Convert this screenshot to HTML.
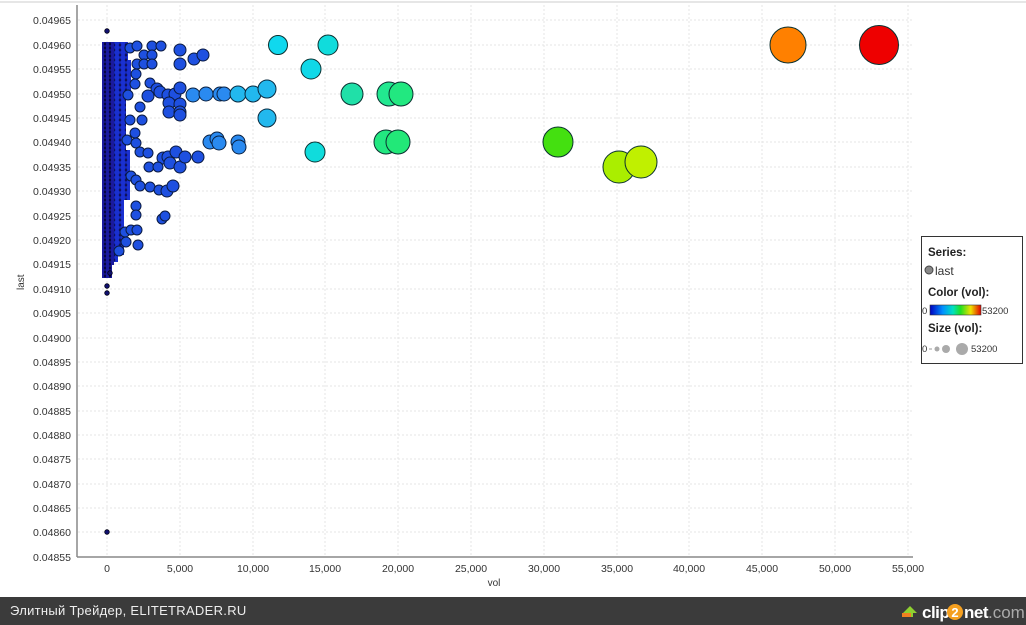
<!DOCTYPE html>
<html><head><meta charset="utf-8"><style>
body{margin:0;width:1026px;height:625px;overflow:hidden;background:#fff;font-family:"Liberation Sans",sans-serif}
svg{position:absolute;left:0;top:0}
</style></head><body>
<svg width="1026" height="625" viewBox="0 0 1026 625" font-family="Liberation Sans, sans-serif">
<defs>
<pattern id="p1" width="5" height="4" patternUnits="userSpaceOnUse"><rect width="5" height="4" fill="#0a0a55"/><circle cx="2.5" cy="2" r="2.6" fill="#1a1aa0" stroke="#000028" stroke-width="0.7"/></pattern>
<pattern id="p2" width="6" height="5" patternUnits="userSpaceOnUse"><circle cx="3" cy="2.5" r="3.3" fill="#1a30d0" stroke="#000040" stroke-width="0.8"/></pattern>
<linearGradient id="cg" x1="0" x2="1"><stop offset="0" stop-color="#0000c0"/><stop offset="0.25" stop-color="#0090ff"/><stop offset="0.45" stop-color="#00e0c0"/><stop offset="0.6" stop-color="#20e020"/><stop offset="0.8" stop-color="#f0e000"/><stop offset="1" stop-color="#e00000"/></linearGradient>
</defs>
<line x1="0" y1="2" x2="1026" y2="2" stroke="#ccc"/>
<g stroke="#e4e4e4" stroke-dasharray="2,2">
<line x1="78" x2="913" y1="20" y2="20"/><line x1="78" x2="913" y1="45" y2="45"/><line x1="78" x2="913" y1="69" y2="69"/><line x1="78" x2="913" y1="94" y2="94"/><line x1="78" x2="913" y1="118" y2="118"/><line x1="78" x2="913" y1="142" y2="142"/><line x1="78" x2="913" y1="167" y2="167"/><line x1="78" x2="913" y1="191" y2="191"/><line x1="78" x2="913" y1="216" y2="216"/><line x1="78" x2="913" y1="240" y2="240"/><line x1="78" x2="913" y1="264" y2="264"/><line x1="78" x2="913" y1="289" y2="289"/><line x1="78" x2="913" y1="313" y2="313"/><line x1="78" x2="913" y1="338" y2="338"/><line x1="78" x2="913" y1="362" y2="362"/><line x1="78" x2="913" y1="386" y2="386"/><line x1="78" x2="913" y1="411" y2="411"/><line x1="78" x2="913" y1="435" y2="435"/><line x1="78" x2="913" y1="459" y2="459"/><line x1="78" x2="913" y1="484" y2="484"/><line x1="78" x2="913" y1="508" y2="508"/><line x1="78" x2="913" y1="532" y2="532"/>
<line y1="5" y2="557" x1="107" x2="107"/><line y1="5" y2="557" x1="180" x2="180"/><line y1="5" y2="557" x1="253" x2="253"/><line y1="5" y2="557" x1="325" x2="325"/><line y1="5" y2="557" x1="398" x2="398"/><line y1="5" y2="557" x1="471" x2="471"/><line y1="5" y2="557" x1="544" x2="544"/><line y1="5" y2="557" x1="617" x2="617"/><line y1="5" y2="557" x1="689" x2="689"/><line y1="5" y2="557" x1="762" x2="762"/><line y1="5" y2="557" x1="835" x2="835"/><line y1="5" y2="557" x1="908" x2="908"/>
</g>
<line x1="77" y1="5" x2="77" y2="557" stroke="#888" stroke-width="1.5"/>
<line x1="77" y1="557" x2="913" y2="557" stroke="#888" stroke-width="1.5"/>
<g font-size="10.5" fill="#333" text-anchor="end">
<text x="71" y="24">0.04965</text><text x="71" y="49">0.04960</text><text x="71" y="73">0.04955</text><text x="71" y="98">0.04950</text><text x="71" y="122">0.04945</text><text x="71" y="146">0.04940</text><text x="71" y="171">0.04935</text><text x="71" y="195">0.04930</text><text x="71" y="220">0.04925</text><text x="71" y="244">0.04920</text><text x="71" y="268">0.04915</text><text x="71" y="293">0.04910</text><text x="71" y="317">0.04905</text><text x="71" y="342">0.04900</text><text x="71" y="366">0.04895</text><text x="71" y="390">0.04890</text><text x="71" y="415">0.04885</text><text x="71" y="439">0.04880</text><text x="71" y="463">0.04875</text><text x="71" y="488">0.04870</text><text x="71" y="512">0.04865</text><text x="71" y="536">0.04860</text><text x="71" y="561">0.04855</text>
</g>
<g font-size="10.5" fill="#333" text-anchor="middle">
<text x="107" y="572">0</text><text x="180" y="572">5,000</text><text x="253" y="572">10,000</text><text x="325" y="572">15,000</text><text x="398" y="572">20,000</text><text x="471" y="572">25,000</text><text x="544" y="572">30,000</text><text x="617" y="572">35,000</text><text x="689" y="572">40,000</text><text x="762" y="572">45,000</text><text x="835" y="572">50,000</text><text x="908" y="572">55,000</text>
<text x="494" y="586" font-size="10">vol</text>
</g>
<text x="0" y="0" font-size="10" fill="#333" transform="translate(24,290) rotate(-90)">last</text>
<!-- dense cluster -->
<path d="M112,42 H128 V60 H131 V100 H126 V150 H130 V200 H124 V255 H118 V262 H112 Z" fill="url(#p2)"/>
<path d="M102,42 H114 V265 H112 V278 H102 Z" fill="url(#p1)"/>
<g stroke="#001" stroke-width="0.8">
<circle cx="107" cy="31" r="2.3" fill="#101070"/><circle cx="107" cy="532" r="2.3" fill="#101070"/>
<circle cx="107" cy="286" r="2.3" fill="#101070"/><circle cx="107" cy="293" r="2.3" fill="#101070"/><circle cx="110" cy="273" r="2.3" fill="#101070"/>
</g>
<g stroke="#0a1a40" stroke-width="1" fill="#1e50e0">
<circle cx="128" cy="95" r="5"/><circle cx="130" cy="120" r="5"/><circle cx="127" cy="140" r="5"/><circle cx="125" cy="232" r="5"/><circle cx="126" cy="242" r="5"/><circle cx="119" cy="251" r="5"/><circle cx="130" cy="48" r="5"/>
<circle cx="137" cy="46" r="5"/><circle cx="152" cy="46" r="5"/><circle cx="161" cy="46" r="5"/><circle cx="144" cy="55" r="5"/><circle cx="152" cy="55" r="5"/><circle cx="137" cy="64" r="5"/><circle cx="144" cy="64" r="5"/><circle cx="152" cy="64" r="5"/><circle cx="136" cy="74" r="5"/><circle cx="135" cy="84" r="5"/>
<circle cx="150" cy="83" r="5"/><circle cx="157" cy="89" r="6"/><circle cx="160" cy="92" r="6"/><circle cx="148" cy="96" r="6"/><circle cx="168" cy="95" r="6"/><circle cx="175" cy="94" r="6"/><circle cx="180" cy="88" r="6"/><circle cx="169" cy="103" r="6"/><circle cx="169" cy="112" r="6"/><circle cx="180" cy="104" r="6"/><circle cx="180" cy="112" r="6"/><circle cx="180" cy="115" r="6"/><circle cx="140" cy="107" r="5"/><circle cx="142" cy="120" r="5"/>
<circle cx="135" cy="133" r="5"/><circle cx="136" cy="143" r="5"/><circle cx="140" cy="152" r="5"/><circle cx="148" cy="153" r="5"/><circle cx="163" cy="158" r="6"/><circle cx="168" cy="157" r="6"/><circle cx="170" cy="163" r="6"/><circle cx="176" cy="152" r="6"/><circle cx="180" cy="167" r="6"/><circle cx="185" cy="157" r="6"/><circle cx="198" cy="157" r="6"/><circle cx="149" cy="167" r="5"/><circle cx="158" cy="167" r="5"/>
<circle cx="131" cy="176" r="5"/><circle cx="136" cy="180" r="5"/><circle cx="140" cy="186" r="5"/><circle cx="150" cy="187" r="5"/><circle cx="159" cy="190" r="5"/><circle cx="167" cy="191" r="6"/><circle cx="173" cy="186" r="6"/><circle cx="136" cy="206" r="5"/><circle cx="136" cy="215" r="5"/><circle cx="162" cy="219" r="5"/><circle cx="165" cy="216" r="5"/><circle cx="131" cy="230" r="5"/><circle cx="137" cy="230" r="5"/><circle cx="138" cy="245" r="5"/>
<circle cx="180" cy="50" r="6"/><circle cx="180" cy="64" r="6"/><circle cx="194" cy="59" r="6"/><circle cx="203" cy="55" r="6"/>
</g>
<g stroke="#0a2040" stroke-width="1" fill="#2a8af0">
<circle cx="193" cy="95" r="7"/><circle cx="206" cy="94" r="7"/><circle cx="220" cy="94" r="7"/><circle cx="224" cy="94" r="7"/><circle cx="210" cy="142" r="7"/><circle cx="217" cy="139" r="7"/><circle cx="219" cy="143" r="7"/><circle cx="238" cy="142" r="7"/><circle cx="239" cy="147" r="7"/>
</g>
<g stroke="#0a2a40" stroke-width="1" fill="#22b8ee">
<circle cx="238" cy="94" r="8"/><circle cx="253" cy="94" r="8"/><circle cx="267" cy="89" r="9"/><circle cx="267" cy="118" r="9"/>
</g>
<g stroke="#0a3030" stroke-width="1">
<circle cx="278" cy="45" r="9.5" fill="#10d8ee"/><circle cx="311" cy="69" r="10" fill="#10d8e8"/><circle cx="328" cy="45" r="10" fill="#10dcdc"/><circle cx="315" cy="152" r="10" fill="#10dcdc"/>
<circle cx="352" cy="94" r="11" fill="#20e0a8"/>
<circle cx="389" cy="94" r="12" fill="#22e890"/><circle cx="401" cy="94" r="12" fill="#22e880"/><circle cx="386" cy="142" r="12" fill="#22e880"/><circle cx="398" cy="142" r="12" fill="#22e878"/>
<circle cx="558" cy="142" r="15" fill="#44e010"/>
<circle cx="619" cy="167" r="16" fill="#aaee00"/><circle cx="641" cy="162" r="16" fill="#c0f000"/>
<circle cx="788" cy="45" r="18" fill="#ff8000"/><circle cx="879" cy="45" r="19.5" fill="#ee0000"/>
</g>
<!-- legend -->
<rect x="921.5" y="236.5" width="101" height="127" fill="#fff" stroke="#333"/>
<text x="928" y="256" font-size="11.5" font-weight="bold" fill="#222">Series:</text>
<circle cx="929" cy="270" r="4" fill="#888" stroke="#444"/>
<text x="935" y="275" font-size="12" fill="#333">last</text>
<text x="928" y="296" font-size="11.5" font-weight="bold" fill="#222">Color (vol):</text>
<text x="922" y="314" font-size="9.5" fill="#333">0</text>
<rect x="930" y="305" width="51" height="10" fill="url(#cg)" stroke="#333" stroke-width="0.6"/>
<text x="982" y="314" font-size="9.5" fill="#333">53200</text>
<text x="928" y="332" font-size="11.5" font-weight="bold" fill="#222">Size (vol):</text>
<text x="922" y="352" font-size="9.5" fill="#333">0</text>
<line x1="929" y1="349" x2="932" y2="349" stroke="#999"/>
<circle cx="937" cy="349" r="2.5" fill="#aaa"/><circle cx="946" cy="349" r="4" fill="#aaa"/><circle cx="962" cy="349" r="6" fill="#aaa"/>
<text x="971" y="352" font-size="9.5" fill="#333">53200</text>
<!-- footer -->
<rect x="0" y="597" width="1026" height="28" fill="#3b3b3b"/>
<text x="10" y="615" font-size="13" fill="#eee" letter-spacing="0.3">Элитный Трейдер, ELITETRADER.RU</text>
<path d="M903,613 L910,606 L917,613 L913,613 L913,617 L907,617 L907,613 Z" fill="#8fd030"/>
<rect x="902" y="613" width="9" height="4" fill="#f08020"/>
<text x="922" y="618" font-size="17" fill="#fff" font-weight="bold" letter-spacing="-0.5">clip</text>
<circle cx="955" cy="612" r="8" fill="#f5a020"/>
<text x="955" y="617" font-size="13" fill="#fff" font-weight="bold" text-anchor="middle">2</text>
<text x="964" y="618" font-size="17" fill="#fff" font-weight="bold" letter-spacing="-0.5">net</text>
<text x="988" y="618" font-size="17" fill="#aaa">.com</text>
</svg>
</body></html>
